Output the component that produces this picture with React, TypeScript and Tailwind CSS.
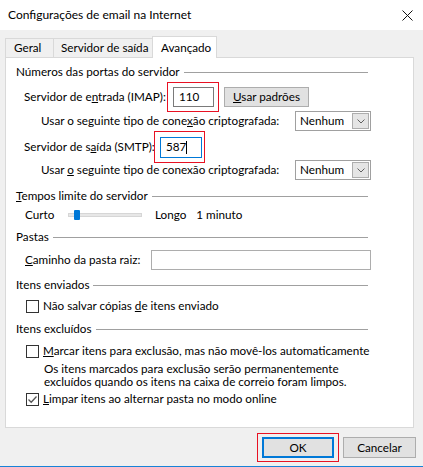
import React from 'react';

const GroupTitle = ({ children, mt }: { children: React.ReactNode; mt: string }) => (
  <div className={`flex items-center h-[18px] pl-[10px] pr-[45px] ${mt}`}>
    <span className="whitespace-nowrap">{children}</span>
    <div className="flex-1 h-px bg-[#a0a0a0] ml-[4px]" />
  </div>
);

const Select = () => (
  <div className="w-[76px] h-[20px] border border-[#a0a0a0] bg-white flex items-center justify-between pl-[4px] pr-px">
    <span>Nenhum</span>
    <div className="w-[17px] h-[16px] bg-[#e5e5e5] border border-[#adadad] flex items-center justify-center">
      <svg width="8" height="5" viewBox="0 0 8 5">
        <path d="M0.5 0.5 L4 4 L7.5 0.5" fill="none" stroke="#606060" strokeWidth="1" />
      </svg>
    </div>
  </div>
);

const Checkbox = ({ checked }: { checked?: boolean }) => (
  <div className="w-[13px] h-[13px] border border-[#333] bg-white flex items-center justify-center shrink-0">
    {checked && (
      <svg width="11" height="11" viewBox="0 0 11 11">
        <path d="M1.5 5.5 L4.2 8.2 L9.5 2.5" fill="none" stroke="#555" strokeWidth="1.3" />
      </svg>
    )}
  </div>
);

export default function App() {
  return (
    <div className="w-[423px] h-[467px] bg-[#f0f0f0] flex flex-col border-b border-[#1883d7] text-[11.7px] text-black font-['Lato','Noto_Sans',sans-serif] leading-none whitespace-nowrap overflow-hidden">
      {/* title bar */}
      <div className="h-[30px] bg-white flex items-center justify-between pl-[8px] pr-[10px] shrink-0">
        <span className="text-[12px]">Configurações de email na Internet</span>
        <svg width="11" height="11" viewBox="0 0 11 11">
          <path d="M0.5 0.5 L10.5 10.5 M10.5 0.5 L0.5 10.5" stroke="#111" strokeWidth="1" />
        </svg>
      </div>

      <div className="px-[5px] pt-[6px] flex flex-col">
        {/* tabs */}
        <div className="flex items-end h-[21px] relative z-10">
          <div className="w-[49px] h-[19px] border border-b-0 border-[#d9d9d9] bg-[#f0f0f0] flex items-center pl-[8px]">Geral</div>
          <div className="w-[99px] h-[19px] border border-b-0 border-l-0 border-[#d9d9d9] bg-[#f0f0f0] flex items-center pl-[7px]">Servidor de saída</div>
          <div className="w-[65px] h-[22px] -mb-px border border-b-0 border-[#d9d9d9] bg-white flex items-center pl-[8px] -ml-px">Avançado</div>
        </div>

        {/* panel */}
        <div className="w-[409px] h-[371px] bg-white border border-[#d9d9d9] flex flex-col">
          <GroupTitle mt="mt-[5px]">Números das portas do servidor</GroupTitle>

          <div className="flex items-center h-[22px] mt-[5px] pl-[18px]">
            <span className="w-[149px]">Servidor de e<u>n</u>trada (IMAP):</span>
            <div className="relative">
              <div className="w-[41px] h-[20px] border border-[#7a7a7a] bg-white flex items-center pl-[5px]">110</div>
              <div className="absolute -left-[6px] -top-[5px] w-[52px] h-[30px] border border-[#e81123]" />
            </div>
            <div className="ml-[10px] w-[85px] h-[20px] bg-[#e1e1e1] border border-[#adadad] flex items-center justify-center">
              <span><u>U</u>sar padrões</span>
            </div>
          </div>

          <div className="flex items-center h-[20px] mt-[3px] pl-[35px]">
            <span className="w-[254px]">Usar o seguinte tipo de cone<u>x</u>ão criptografada:</span>
            <Select />
          </div>

          <div className="flex items-center h-[22px] mt-[5px] pl-[18px]">
            <span className="w-[136px]">Servidor de s<u>a</u>ída (SMTP):</span>
            <div className="relative">
              <div className="w-[42px] h-[21px] border border-[#0078d7] bg-white flex items-center pl-[5px]">
                587<span className="w-px h-[13px] bg-black" />
              </div>
              <div className="absolute -left-[6px] -top-[6px] w-[51px] h-[32px] border border-[#e81123]" />
            </div>
          </div>

          <div className="flex items-center h-[20px] mt-[2px] pl-[35px]">
            <span className="w-[254px]">Usar <u>o</u> seguinte tipo de conexão criptografada:</span>
            <Select />
          </div>

          <GroupTitle mt="mt-[7px]"><u>T</u>empos limite do servidor</GroupTitle>

          <div className="flex items-center h-[18px] mt-[1px] pl-[19px]">
            <span className="w-[43px]">Curto</span>
            <div className="relative w-[74px] h-[4px] bg-[#e7e7e7] border border-[#d6d6d6]">
              <div className="absolute left-[5px] -top-[4px] w-[6px] h-[10px] bg-[#0078d7] rounded-[1px]" />
            </div>
            <span className="ml-[13px]">Longo</span>
            <span className="ml-[10px]">1 minuto</span>
          </div>

          <GroupTitle mt="mt-[4px]">Pastas</GroupTitle>

          <div className="flex items-center h-[20px] mt-[4px] pl-[19px]">
            <span className="w-[126px]"><u>C</u>aminho da pasta raiz:</span>
            <div className="w-[220px] h-[20px] border border-[#adadad] bg-white" />
          </div>

          <GroupTitle mt="mt-[6px]">Itens enviados</GroupTitle>

          <div className="flex items-center h-[18px] mt-[3px] pl-[20px] gap-[4px]">
            <Checkbox />
            <span>Não salvar cópias <u>d</u>e itens enviado</span>
          </div>

          <GroupTitle mt="mt-[5px]">Itens excluídos</GroupTitle>

          <div className="flex items-center h-[18px] mt-[4px] pl-[20px] gap-[4px]">
            <Checkbox />
            <span><u>M</u>arcar itens para exclusão, mas não movê-los automaticamente</span>
          </div>

          <div className="mt-[2px] pl-[38px] leading-[13px] flex flex-col">
            <span>Os itens marcados para exclusão serão permanentemente</span>
            <span>excluídos quando os itens na caixa de correio foram limpos.</span>
          </div>

          <div className="flex items-center h-[18px] mt-[2px] pl-[20px] gap-[4px]">
            <Checkbox checked />
            <span><u>L</u>impar itens ao alternar pasta no modo online</span>
          </div>
        </div>

        {/* buttons */}
        <div className="flex justify-end gap-[9px] mt-[9px] pr-[2px]">
          <div className="relative">
            <div className="w-[72px] h-[21px] bg-[#e1e1e1] border-2 border-[#0078d7] flex items-center justify-center">OK</div>
            <div className="absolute -left-[5px] -top-[4px] w-[82px] h-[29px] border border-[#e81123]" />
          </div>
          <div className="w-[73px] h-[21px] bg-[#e1e1e1] border border-[#adadad] flex items-center justify-center">Cancelar</div>
        </div>
      </div>
    </div>
  );
}
